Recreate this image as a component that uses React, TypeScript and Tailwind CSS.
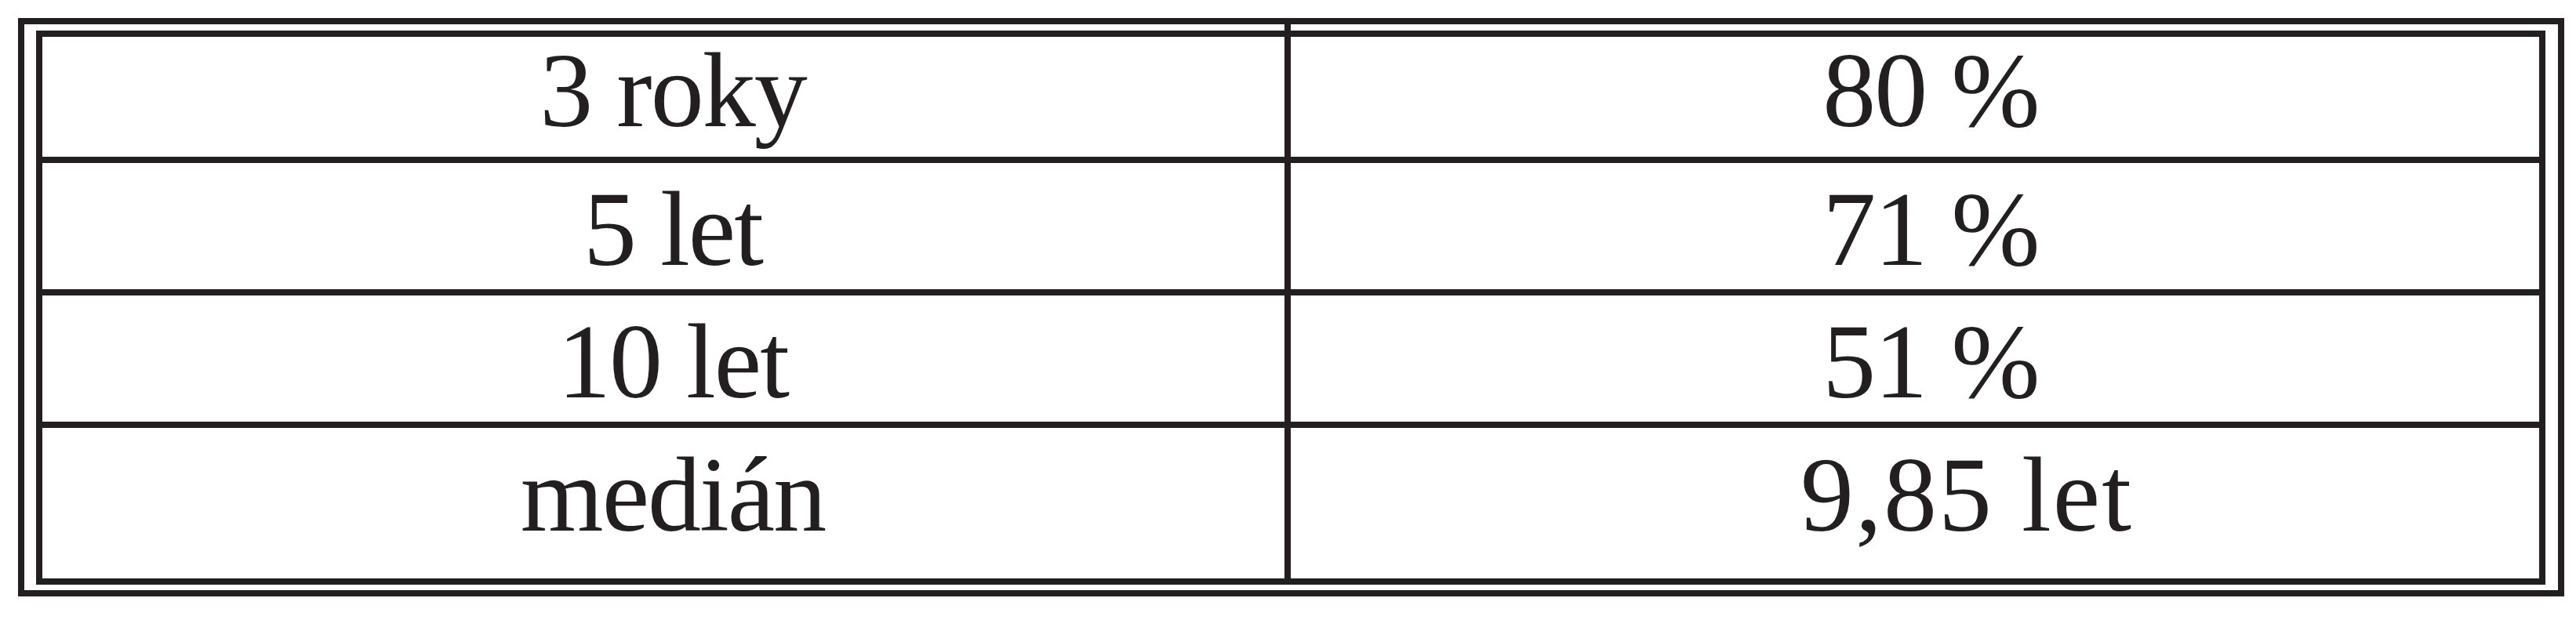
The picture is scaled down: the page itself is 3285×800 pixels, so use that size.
const rows = [
  { left: "3 roky", right: "80 %", h: "h-[153px]", pt: "pt-0", rightCls: "pl-[40px] tracking-[-2px]" },
  { left: "5 let", right: "71 %", h: "h-[161px]", pt: "pt-[16px]", rightCls: "pl-[40px] tracking-[-2px]" },
  { left: "10 let", right: "51 %", h: "h-[161px]", pt: "pt-[16px]", rightCls: "pl-[40px] tracking-[-2px]" },
  { left: "medián", right: "9,85 let", h: "h-[192px]", pt: "pt-[17px]", rightCls: "pl-[132px] tracking-[2px]" },
];

export default function App() {
  return (
    <div className="min-h-[800px] w-[3285px] bg-white p-[23px] text-[#231f20] [font-family:'Liberation_Serif','Times_New_Roman',serif]">
      <div className="w-[3247px] border-[8px] border-[#231f20] pr-[16px] pb-[7px] pl-[15px]">
        {/* vertical rule runs through the top gap */}
        <div className="flex h-[8px]">
          <div className="w-[1592px]" />
          <div className="w-[8px] bg-[#231f20]" />
        </div>
        <div className="border-[8px] border-[#231f20]">
          {rows.map((row, i) => (
            <div key={row.left}>
              {i > 0 && <div className="h-[8px] bg-[#231f20]" />}
              <div className={`flex ${row.h}`}>
                <div
                  className={`flex w-[1584px] justify-center pl-[24px] text-[136px] leading-none tracking-[-2px] ${row.pt}`}
                >
                  {row.left}
                </div>
                <div className="w-[8px] bg-[#231f20]" />
                <div
                  className={`flex flex-1 justify-center text-[136px] leading-none ${row.pt} ${row.rightCls}`}
                >
                  {row.right}
                </div>
              </div>
            </div>
          ))}
        </div>
      </div>
    </div>
  );
}
